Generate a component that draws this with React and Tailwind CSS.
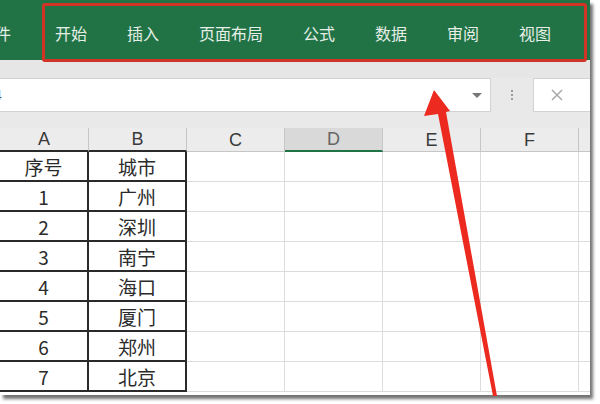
export default function App() {
  const rows = [
    ["序号", "城市"],
    ["1", "广州"],
    ["2", "深圳"],
    ["3", "南宁"],
    ["4", "海口"],
    ["5", "厦门"],
    ["6", "郑州"],
    ["7", "北京"],
  ];
  const tabs = ["开始", "插入", "页面布局", "公式", "数据", "审阅", "视图"];
  return (
    <div className="w-[600px] h-[404px] bg-white relative overflow-hidden font-['Liberation_Sans','Noto_Sans_CJK_SC',sans-serif]">
      <div className="w-[590px] h-[395px] flex flex-col overflow-hidden bg-[#e9e9e9] shadow-[3px_4px_3px_rgba(0,0,0,0.55)]">
        {/* ribbon */}
        <div className="h-[60px] shrink-0 bg-[#217346] flex items-center gap-10 pt-[6px] text-[16px] text-[#e6efe8] font-['Noto_Sans_CJK_SC',sans-serif] whitespace-nowrap">
          <span className="ml-[-21px] mr-[4px]">文件</span>
          {tabs.map((t) => (
            <span key={t}>{t}</span>
          ))}
        </div>
        <div className="h-[18px] shrink-0 bg-[#e6e6e6]" />
        {/* formula bar */}
        <div className="h-[34px] shrink-0 flex">
          <div className="w-[491px] h-full bg-white border border-[#d2d2d2] border-l-0 flex items-center justify-end pr-[8px] relative">
            <span className="absolute left-[-6px] top-[6px] text-[14px] text-[#555]">4</span>
            <div className="w-0 h-0 border-l-[5px] border-r-[5px] border-t-[5px] border-l-transparent border-r-transparent border-t-[#777]" />
          </div>
          <div className="w-[42px] flex flex-col items-center justify-center gap-[2px]">
            <div className="w-[2px] h-[2px] bg-[#9a9a9a]" />
            <div className="w-[2px] h-[2px] bg-[#9a9a9a]" />
            <div className="w-[2px] h-[2px] bg-[#9a9a9a]" />
          </div>
          <div className="flex-1 h-full bg-white border border-[#d2d2d2] border-r-0 flex items-center pl-[16px]">
            <svg width="14" height="14" viewBox="0 0 14 14">
              <path d="M2 2L12 12M12 2L2 12" stroke="#a8a8a8" strokeWidth="1.5" />
            </svg>
          </div>
        </div>
        <div className="h-[16px] shrink-0 bg-[#e9e9e9]" />
        {/* column headers */}
        <div className="h-[24px] shrink-0 flex text-[18px] text-[#3a3a3a] leading-none">
          <div className="w-[89px] border-r border-[#c6c6c6] border-b-2 border-b-[#2a2a2a] flex items-center justify-center bg-[#ececec]">A</div>
          <div className="w-[98px] border-r border-[#c6c6c6] border-b-2 border-b-[#2a2a2a] flex items-center justify-center bg-[#ececec]">B</div>
          <div className="w-[98px] border-r border-[#c6c6c6] border-b border-b-[#c6c6c6] flex items-center justify-center bg-[#ececec]">C</div>
          <div className="w-[98px] border-r border-[#c6c6c6] border-b-2 border-b-[#217346] flex items-center justify-center bg-[#d9d9d9] text-[#666]">D</div>
          <div className="w-[98px] border-r border-[#c6c6c6] border-b border-b-[#c6c6c6] flex items-center justify-center bg-[#ececec]">E</div>
          <div className="w-[98px] border-r border-[#c6c6c6] border-b border-b-[#c6c6c6] flex items-center justify-center bg-[#ececec]">F</div>
          <div className="flex-1 border-b border-b-[#c6c6c6] bg-[#ececec]" />
        </div>
        {/* rows */}
        <div className="flex-1 bg-white flex flex-col text-[19px] text-[#2b2b2b] font-['Noto_Sans_CJK_SC',sans-serif] leading-none">
          {rows.map((r, i) => (
            <div key={i} className="h-[30px] shrink-0 flex">
              <div className="w-[89px] border-r-2 border-b-2 border-[#2a2a2a] flex items-center justify-center">{r[0]}</div>
              <div className="w-[98px] border-r-2 border-b-2 border-[#2a2a2a] flex items-center justify-center">{r[1]}</div>
              <div className="w-[98px] border-r border-b border-[#dcdcdc]" />
              <div className="w-[98px] border-r border-b border-[#dcdcdc]" />
              <div className="w-[98px] border-r border-b border-[#dcdcdc]" />
              <div className="w-[98px] border-r border-b border-[#dcdcdc]" />
              <div className="flex-1 border-b border-[#dcdcdc]" />
            </div>
          ))}
        </div>
      </div>
      {/* red frame annotation */}
      <div className="absolute left-[42px] top-[3px] w-[545px] h-[59px] border-[3px] border-[#d23327] rounded-[3px]" />
      {/* red arrow annotation */}
      <svg className="absolute left-0 top-0" width="600" height="404" viewBox="0 0 600 404">
        <polygon points="434,90 450,111 446,112 497,396 493,396 438,114 424,116" fill="#ec2a1f" />
      </svg>
    </div>
  );
}
